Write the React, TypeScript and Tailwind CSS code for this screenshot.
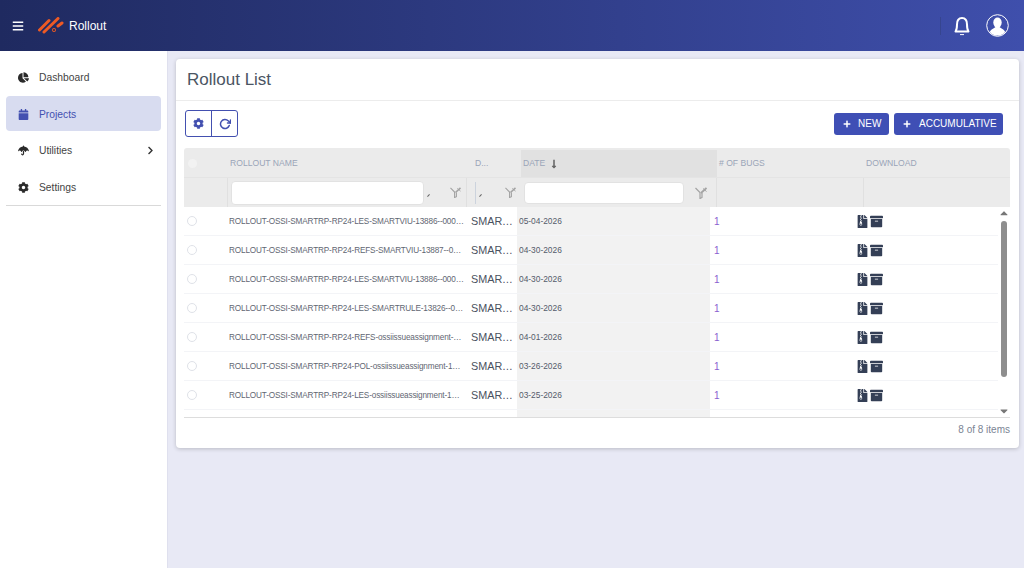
import React from "react";
import { FaBars, FaChartPie, FaCalendar, FaUmbrella, FaCog, FaChevronRight, FaFileArchive, FaArchive, FaPlus, FaLongArrowAltDown, FaCaretUp, FaCaretDown } from "react-icons/fa";
import { FiRotateCw } from "react-icons/fi";

const rows = [
  ["ROLLOUT-OSSI-SMARTRP-RP24-LES-SMARTVIU-13886--00000001", "05-04-2026"],
  ["ROLLOUT-OSSI-SMARTRP-RP24-REFS-SMARTVIU-13887--00000001", "04-30-2026"],
  ["ROLLOUT-OSSI-SMARTRP-RP24-LES-SMARTVIU-13886--00000002", "04-30-2026"],
  ["ROLLOUT-OSSI-SMARTRP-RP24-LES-SMARTRULE-13826--00000001", "04-30-2026"],
  ["ROLLOUT-OSSI-SMARTRP-RP24-REFS-ossiissueassignment-13900", "04-01-2026"],
  ["ROLLOUT-OSSI-SMARTRP-RP24-POL-ossiissueassignment-13900", "03-26-2026"],
  ["ROLLOUT-OSSI-SMARTRP-RP24-LES-ossiissueassignment-13800", "03-25-2026"],
  ["ROLLOUT-OSSI-SMARTRP-RP24-LES-ossiissueassignment-13700", "03-20-2026"],
];

function FilterOff({ className }: { className: string }) {
  return (
    <svg viewBox="0 0 12 12" className={className} fill="none" stroke="currentColor">
      <path d="M0.5 1 L5 5.5 V11.5 L7 10.5 V6" strokeWidth="1.2" />
      <path d="M6 6 L11.5 1" strokeWidth="1.8" />
      <path d="M8 1.5 L11.5 4.5" strokeWidth="1" />
    </svg>
  );
}

function NavItem({ icon, label, active, chevron }: { icon: React.ReactNode; label: string; active?: boolean; chevron?: boolean }) {
  return (
    <div className={active ? "flex h-[35px] items-center rounded bg-[#d8dcf0] pl-[12px] pr-[6px] pt-[2px] text-[#4350b0]" : "flex h-[35px] items-center pl-[12px] pr-[6px] pt-[2px] text-[#444444]"}>
      <span className="flex w-[21px] items-center text-[11px] text-[#2a2a2a]">{icon}</span>
      <span className="flex-1 text-[10.3px]">{label}</span>
      {chevron && <FaChevronRight className="text-[9px] text-[#333333]" />}
    </div>
  );
}

export default function App() {
  return (
    <div className="flex h-[568px] w-[1024px] flex-col overflow-hidden bg-[#e8e9f5] font-['Liberation_Sans',Arial,sans-serif]">
      <header className="flex h-[51px] shrink-0 items-center bg-gradient-to-r from-[#1f2a60] to-[#3f4fac] pl-[12px] pr-[15px] text-white">
        <FaBars className="text-[12px]" />
        <svg viewBox="0 0 26 18" className="ml-[14px] h-[18px] w-[26px]" stroke="#ee5a24" strokeWidth="3" strokeLinecap="round">
          <path d="M1.5 13 L11 3.5" />
          <path d="M6 15 L20 1.5" />
          <path d="M20 9 L24 6" />
          <circle cx="16" cy="13" r="0.5" />
        </svg>
        <span className="ml-[5px] text-[12px]">Rollout</span>
        <div className="flex-1" />
        <div className="mr-[12px] h-[18px] w-px bg-[#36458f]" />
        <svg viewBox="0 0 18 20" className="mr-[15px] h-[20px] w-[18px]" fill="none" stroke="white">
          <path d="M2.5 15.5 C4 13.5 4 11 4 8.5 C4 4.5 6 2 9 2 C12 2 14 4.5 14 8.5 C14 11 14 13.5 15.5 15.5 Z" strokeWidth="2" strokeLinejoin="round" />
          <path d="M7 18.6 H11" strokeWidth="1" />
        </svg>
        <svg viewBox="0 0 23 23" className="h-[23px] w-[23px]" fill="white">
          <circle cx="11.5" cy="11.5" r="10.8" fill="none" stroke="white" strokeWidth="1" />
          <ellipse cx="11.5" cy="8.6" rx="4.2" ry="5" />
          <path d="M3.8 18 C5 15 8 14.5 9.5 13 H13.5 C15 14.5 18 15 19.2 18 C17 20.6 14.5 21.6 11.5 21.6 C8.5 21.6 6 20.6 3.8 18 Z" />
        </svg>
      </header>

      <div className="flex min-h-0 flex-1">
        <aside className="w-[168px] shrink-0 border-r border-[#dfe0ee] bg-white pl-[6px] pr-[6px] pt-[8px]">
          <NavItem icon={<FaChartPie />} label="Dashboard" />
          <div className="mt-[2px]"><NavItem icon={<span className="text-[#4350b0]"><FaCalendar /></span>} label="Projects" active /></div>
          <div className="mt-px"><NavItem icon={<FaUmbrella />} label="Utilities" chevron /></div>
          <div className="mt-[2px]"><NavItem icon={<FaCog />} label="Settings" /></div>
          <div className="mt-px h-px bg-[#d9d9d9]" />
        </aside>

        <main className="min-w-0 flex-1 pl-[8px] pr-[5px] pt-[8px]">
          <div className="h-[389px] rounded-sm bg-white shadow-[0_1px_4px_rgba(0,0,0,0.2)]">
            <div className="flex h-[42px] items-center border-b border-[#ececec] pl-[11px] text-[17px] text-[#4b5563]">Rollout List</div>
            <div className="pl-[8px] pr-[9px]">
              <div className="flex h-[47px] items-center justify-between pb-[2px] pl-px pr-[7px]">
                <div className="flex h-[27px] overflow-hidden rounded-[3px] border border-[#4350b0] bg-white text-[#4350b0]">
                  <span className="flex w-[26px] items-center justify-center border-r border-[#4350b0] text-[11px]"><FaCog /></span>
                  <span className="flex w-[25px] items-center justify-center text-[12px]"><FiRotateCw strokeWidth={3} /></span>
                </div>
                <div className="flex gap-[5px] text-[10px] text-white">
                  <div className="flex h-[22px] w-[55px] items-center rounded-[3px] bg-[#3f4fb5] pl-[9px]"><FaPlus className="mr-[7px] text-[8px]" />NEW</div>
                  <div className="flex h-[22px] w-[109px] items-center rounded-[3px] bg-[#3f4fb5] pl-[9px]"><FaPlus className="mr-[8px] text-[8px]" />ACCUMULATIVE</div>
                </div>
              </div>

              <div className="h-[270px] overflow-hidden rounded-t-[3px] border-b border-[#dddddd]">
                <div className="grid h-[30px] grid-cols-[44px_244px_49px_196px_147px_1fr] items-center border-b border-[#e4e4e4] bg-[#ebebeb] pt-[2px] text-[8.6px] text-[#9aa5b8]">
                  <span className="ml-[4px] h-[9px] w-[9px] rounded-full bg-[#f2f2f2]" />
                  <span className="pl-[2px]">ROLLOUT NAME</span>
                  <span className="pl-[3px]">D...</span>
                  <span className="flex h-full items-center bg-[#e1e1e1] pl-[2px]">DATE<FaLongArrowAltDown className="ml-[4px] text-[10px] text-[#666666]" /></span>
                  <span className="pl-[2px]">
                    # OF BUGS
                  </span>
                  <span className="pl-[2px]">DOWNLOAD</span>
                </div>
                <div className="grid h-[29px] grid-cols-[44px_244px_49px_196px_147px_1fr] items-center bg-[#ebebeb] text-[#a3a3a3]">
                  <span className="h-full border-r border-[#e0e0e0]" />
                  <div className="flex h-full items-center pl-[3px]">
                    <span className="h-[24px] w-[193px] rounded-[4px] border border-[#e2e2e2] bg-white" />
                    <span className="ml-[4px] mt-[5px] h-[3px] w-px rotate-45 bg-[#666666]" />
                    <FilterOff className="ml-[21px] h-[11px] w-[11px]" />
                    <span className="ml-[5px] h-full w-px bg-[#e0e0e0]" />
                  </div>
                  <div className="flex h-full items-center pl-[3px]">
                    <span className="h-[22px] w-px bg-[#ccd3dd]" />
                    <span className="ml-[4px] mt-[5px] h-[3px] w-px rotate-45 bg-[#666666]" />
                    <FilterOff className="ml-[24px] h-[11px] w-[11px]" />
                  </div>
                  <div className="flex h-full items-center border-r border-[#e0e0e0] pl-[3px]">
                    <span className="h-[22px] w-[160px] rounded-[4px] border border-[#e2e2e2] bg-white" />
                    <FilterOff className="ml-[11px] h-[12px] w-[12px]" />
                  </div>
                  <span className="h-full border-r border-[#e0e0e0]" />
                  <span />
                </div>
                <div className="flex h-[210px] bg-white">
                  <div className="min-w-0 flex-1 overflow-hidden">
                    {rows.map(([name, date]) => (
                      <div key={name} className="grid h-[29px] grid-cols-[44px_243px_46px_193px_146px_1fr] items-center border-b border-[#f3f4f7]">
                        <span className="ml-[3px] h-[10px] w-[10px] rounded-full border border-[#dfe2e8]" />
                        <span className="truncate pl-[1px] pr-[7px] pt-[2px] text-[8.2px] tracking-[-0.15px] text-[#5f6672]">{name}</span>
                        <span className="truncate pr-[2px] text-[10.8px] text-[#4a5160]">SMARTRP</span>
                        <span className="flex h-full items-center bg-[#f2f2f2] pl-[2px] pt-[1px] text-[8.4px] text-[#555c6b]">{date}</span>
                        <span className="pl-[4px] text-[10px] text-[#8a5fd0]">1</span>
                        <span className="flex items-center gap-[1px] text-[#343f56]">
                          <FaFileArchive className="text-[13px]" />
                          <FaArchive className="text-[13px]" />
                        </span>
                      </div>
                    ))}
                  </div>
                  <div className="flex w-[12px] shrink-0 flex-col items-center bg-white text-[#777777]">
                    <FaCaretUp className="h-[12px] w-[12px]" />
                    <div className="mt-[2px] h-[156px] w-[6px] rounded-full bg-[#8e8e8e]" />
                    <div className="flex-1" />
                    <FaCaretDown className="h-[12px] w-[12px]" />
                  </div>
                </div>
              </div>
              <div className="pt-[4px] text-right text-[10px] text-[#7b8494]">8 of 8 items</div>
            </div>
          </div>
        </main>
      </div>
    </div>
  );
}
